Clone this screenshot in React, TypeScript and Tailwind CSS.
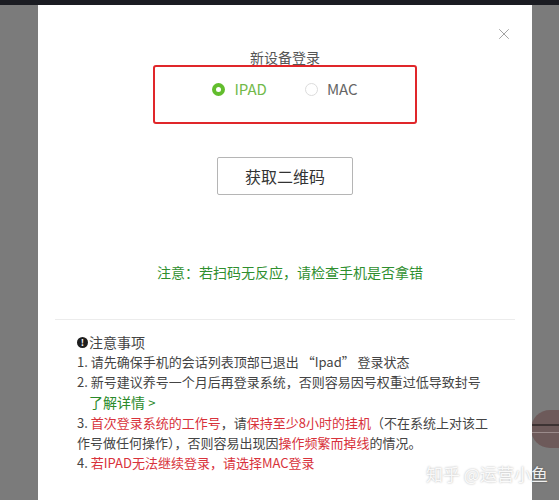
import { X } from "lucide-react";

const font = { fontFamily: '"Noto Sans CJK SC", "Noto Sans", sans-serif' };

function Radio({ label, checked }: { label: string; checked?: boolean }) {
  return (
    <label className="flex items-center gap-[9px]">
      {checked ? (
        <span className="w-[13px] h-[13px] rounded-full bg-[#62bd2d] flex items-center justify-center">
          <span className="w-[5px] h-[5px] rounded-full bg-white" />
        </span>
      ) : (
        <span className="w-[13px] h-[13px] rounded-full border border-[#dcdcdc] bg-white" />
      )}
      <span className={`text-[15px] leading-5 ${checked ? "text-[#72b94a]" : "text-[#666]"}`}>{label}</span>
    </label>
  );
}

export default function App() {
  return (
    <div className="relative w-[559px] h-[500px] bg-[#7b7b7b] overflow-hidden" style={font}>
      <div className="h-[5px] bg-[#1b1c22]" />

      {/* thing peeking out behind the dialog */}
      <div className="absolute left-[531px] top-[410px] w-[56px] h-[38px] rounded-full bg-[#6d5a5a] overflow-hidden">
        <div className="mt-[14px] h-[2px] bg-[#3d3333]" />
        <div className="mt-[6px] h-[1px] bg-[#9b8b8b]" />
      </div>

      <div className="relative ml-[38px] w-[494px] h-[495px] bg-white flex flex-col items-center">
        <button className="absolute right-[19px] top-[20px] text-[#999]">
          <X className="w-[18px] h-[18px]" strokeWidth={1.2} />
        </button>

        <h2 className="mt-[42px] text-[14px] leading-5 text-[#555]">新设备登录</h2>

        <div className="-mt-[2px] w-[264px] h-[59px] border-2 border-[#e0262a] rounded-[3px] flex justify-center pt-[12px]">
          <div className="flex items-start gap-[38px] h-5">
            <Radio label="IPAD" checked />
            <Radio label="MAC" />
          </div>
        </div>

        <button className="mt-[33px] w-[136px] h-[38px] border border-[#b5b5b5] rounded-[2px] text-[16px] text-[#333]">
          获取二维码
        </button>

        <p className="mt-[67px] ml-[10px] text-[14px] leading-5 text-[#2f8f2f]">注意：若扫码无反应，请检查手机是否拿错</p>

        <div className="mt-[37px] w-[460px] h-px bg-[#ececec]" />

        <div className="self-stretch pl-[39px] mt-[12px] text-[13px] leading-5 text-[#444]">
          <div className="flex items-center">
            <span className="w-[11px] h-[11px] rounded-full bg-[#1e1e1e] text-white text-[9px] leading-[11px] font-bold flex items-center justify-center mr-[1px]">!</span>
            <span className="text-[14px]">注意事项</span>
          </div>
          <div>1. 请先确保手机的会话列表顶部已退出 “Ipad” 登录状态</div>
          <div>2. 新号建议养号一个月后再登录系统，否则容易因号权重过低导致封号</div>
          <div className="pl-[12px] text-[#2a8a2a] text-[14px]">了解详情 <span className="text-[13px]">&gt;</span></div>
          <div>
            3. <span className="text-[#d8323b]">首次登录系统的工作号</span>，请<span className="text-[#d8323b]">保持至少8小时的挂机</span>（不在系统上对该工
          </div>
          <div>
            作号做任何操作），否则容易出现因<span className="text-[#d8323b]">操作频繁而掉线</span>的情况。
          </div>
          <div>
            4. <span className="text-[#d8323b]">若IPAD无法继续登录，请选择MAC登录</span>
          </div>
        </div>
      </div>

      <div className="absolute left-[426px] top-[462px] text-[17px] leading-6 text-white/90 [text-shadow:0_0_2px_rgba(0,0,0,0.35)]">
        知乎 @运营小鱼
      </div>
    </div>
  );
}
